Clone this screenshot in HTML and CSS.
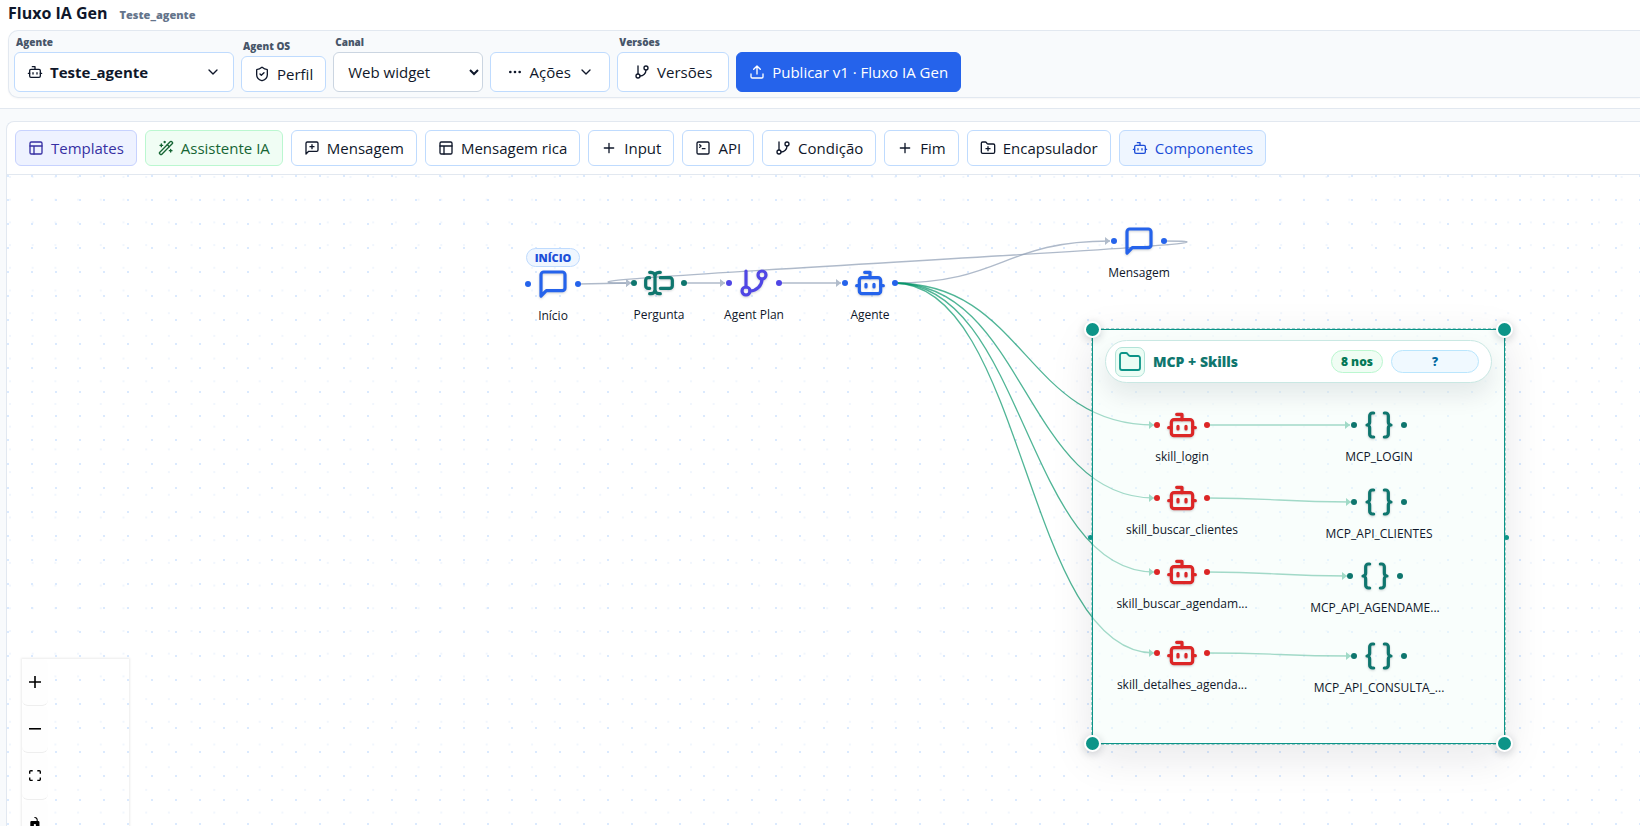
FILE: index.html
```
<!DOCTYPE html>
<html lang="pt-BR">
<head>
    <meta charset="UTF-8">
    <meta name="viewport" content="width=device-width, initial-scale=1.0">
    <title>Fluxo IA Gen</title>
    <link rel="stylesheet" href="styles.css">
</head>
<body>
    <!-- Icon sprite -->
    <svg class="sprite" aria-hidden="true">
        <symbol id="i-bot" viewBox="0 0 24 24"><path d="M12 8V4H8"/><rect width="16" height="12" x="4" y="8" rx="2"/><path d="M2 14h2M20 14h2M15 13v2M9 13v2"/></symbol>
        <symbol id="i-chevron" viewBox="0 0 24 24"><path d="m6 9 6 6 6-6"/></symbol>
        <symbol id="i-shield" viewBox="0 0 24 24"><path d="M20 13c0 5-3.5 7.5-7.66 8.95a1 1 0 0 1-.67-.01C7.5 20.5 4 18 4 13V6a1 1 0 0 1 1-1c2 0 4.5-1.2 6.24-2.72a1.17 1.17 0 0 1 1.52 0C14.51 3.81 17 5 19 5a1 1 0 0 1 1 1z"/><path d="m9 12 2 2 4-4"/></symbol>
        <symbol id="i-dots" viewBox="0 0 24 24"><circle cx="12" cy="12" r="1"/><circle cx="19" cy="12" r="1"/><circle cx="5" cy="12" r="1"/></symbol>
        <symbol id="i-branch" viewBox="0 0 24 24"><path d="M6 3v12"/><circle cx="18" cy="6" r="3"/><circle cx="6" cy="18" r="3"/><path d="M18 9a9 9 0 0 1-9 9"/></symbol>
        <symbol id="i-upload" viewBox="0 0 24 24"><path d="M12 3v12M17 8l-5-5-5 5M21 15v4a2 2 0 0 1-2 2H5a2 2 0 0 1-2-2v-4"/></symbol>
        <symbol id="i-layout" viewBox="0 0 24 24"><rect width="18" height="18" x="3" y="3" rx="2"/><path d="M3 9h18M9 21V9"/></symbol>
        <symbol id="i-wand" viewBox="0 0 24 24"><path d="m21.64 3.64-1.28-1.28a1.21 1.21 0 0 0-1.72 0L2.36 18.64a1.21 1.21 0 0 0 0 1.72l1.28 1.28a1.2 1.2 0 0 0 1.72 0L21.64 5.36a1.2 1.2 0 0 0 0-1.72"/><path d="m14 7 3 3M5 6v4M19 14v4M10 2v2M7 8H3M21 16h-4M11 3H9"/></symbol>
        <symbol id="i-message" viewBox="0 0 24 24"><path d="M21 15a2 2 0 0 1-2 2H7l-4 4V5a2 2 0 0 1 2-2h14a2 2 0 0 1 2 2z"/></symbol>
        <symbol id="i-message-plus" viewBox="0 0 24 24"><path d="M21 15a2 2 0 0 1-2 2H7l-4 4V5a2 2 0 0 1 2-2h14a2 2 0 0 1 2 2z"/><path d="M12 7v6M9 10h6"/></symbol>
        <symbol id="i-plus" viewBox="0 0 24 24"><path d="M5 12h14M12 5v14"/></symbol>
        <symbol id="i-terminal" viewBox="0 0 24 24"><path d="m7 11 2-2-2-2M11 13h4"/><rect width="18" height="18" x="3" y="3" rx="2"/></symbol>
        <symbol id="i-folder" viewBox="0 0 24 24"><path d="M20 20a2 2 0 0 0 2-2V8a2 2 0 0 0-2-2h-7.9a2 2 0 0 1-1.69-.9L9.6 3.9A2 2 0 0 0 7.93 3H4a2 2 0 0 0-2 2v13a2 2 0 0 0 2 2Z"/></symbol>
        <symbol id="i-folder-plus" viewBox="0 0 24 24"><path d="M20 20a2 2 0 0 0 2-2V8a2 2 0 0 0-2-2h-7.9a2 2 0 0 1-1.69-.9L9.6 3.9A2 2 0 0 0 7.93 3H4a2 2 0 0 0-2 2v13a2 2 0 0 0 2 2Z"/><path d="M12 10v6M9 13h6"/></symbol>
        <symbol id="i-input" viewBox="0 0 24 24"><path d="M5 4h1a3 3 0 0 1 3 3 3 3 0 0 1 3-3h1M13 20h-1a3 3 0 0 1-3-3 3 3 0 0 1-3 3H5M5 16H4a2 2 0 0 1-2-2v-4a2 2 0 0 1 2-2h1M13 8h7a2 2 0 0 1 2 2v4a2 2 0 0 1-2 2h-7M9 7v10"/></symbol>
        <symbol id="i-braces" viewBox="0 0 24 24"><path d="M8 3H7a2 2 0 0 0-2 2v5a2 2 0 0 1-2 2 2 2 0 0 1 2 2v5c0 1.1.9 2 2 2h1M16 21h1a2 2 0 0 0 2-2v-5c0-1.1.9-2 2-2a2 2 0 0 1-2-2V5a2 2 0 0 0-2-2h-1"/></symbol>
    </svg>

    <header class="header">
        <div class="title-row">
            <h1 class="title">Fluxo IA Gen</h1>
            <span class="subtitle">Teste_agente</span>
        </div>
        <div class="command-bar">
            <div class="field">
                <label class="field-label" for="agent">Agente</label>
                <button class="btn btn-agent" id="agent" type="button">
                    <svg class="icon"><use href="#i-bot"/></svg>
                    <span class="agent-name">Teste_agente</span>
                    <svg class="icon"><use href="#i-chevron"/></svg>
                </button>
            </div>
            <div class="field">
                <label class="field-label" for="profile">Agent OS</label>
                <button class="btn btn-short" id="profile" type="button"><svg class="icon"><use href="#i-shield"/></svg>Perfil</button>
            </div>
            <div class="field">
                <label class="field-label" for="channel">Canal</label>
                <select class="select" id="channel">
                    <option>Web widget</option>
                </select>
            </div>
            <button class="btn btn-actions" type="button"><svg class="icon"><use href="#i-dots"/></svg>Ações<svg class="icon"><use href="#i-chevron"/></svg></button>
            <div class="field">
                <label class="field-label" for="versions">Versões</label>
                <button class="btn btn-versions" id="versions" type="button"><svg class="icon"><use href="#i-branch"/></svg>Versões</button>
            </div>
            <button class="btn btn-primary" type="button"><svg class="icon"><use href="#i-upload"/></svg>Publicar v1 · Fluxo IA Gen</button>
        </div>
    </header>

    <main class="workspace">
        <section class="panel">
            <div class="toolbar">
                <button class="btn btn-short btn-indigo" type="button"><svg class="icon"><use href="#i-layout"/></svg>Templates</button>
                <button class="btn btn-short btn-green" type="button"><svg class="icon"><use href="#i-wand"/></svg>Assistente IA</button>
                <button class="btn btn-short" type="button"><svg class="icon"><use href="#i-message-plus"/></svg>Mensagem</button>
                <button class="btn btn-short" type="button"><svg class="icon"><use href="#i-layout"/></svg>Mensagem rica</button>
                <button class="btn btn-short" type="button"><svg class="icon"><use href="#i-plus"/></svg>Input</button>
                <button class="btn btn-short" type="button"><svg class="icon"><use href="#i-terminal"/></svg>API</button>
                <button class="btn btn-short" type="button"><svg class="icon"><use href="#i-branch"/></svg>Condição</button>
                <button class="btn btn-short" type="button"><svg class="icon"><use href="#i-plus"/></svg>Fim</button>
                <button class="btn btn-short" type="button"><svg class="icon"><use href="#i-folder-plus"/></svg>Encapsulador</button>
                <button class="btn btn-short btn-blue" type="button"><svg class="icon"><use href="#i-bot"/></svg>Componentes</button>
            </div>

            <div class="canvas">
                <svg class="edges" aria-hidden="true">
                    <defs>
                        <pattern id="grid" width="24" height="24" patternUnits="userSpaceOnUse"><rect class="grid-dot" width="2" height="2"/></pattern>
                        <pattern id="grid-faint" x="2" y="1" width="22.7" height="22.7" patternUnits="userSpaceOnUse"><circle class="grid-dot-faint" cx="1" cy="1" r="1"/></pattern>
                        <marker id="arrow" markerUnits="userSpaceOnUse" markerWidth="6" markerHeight="8" refX="5" refY="4" orient="auto"><path class="arrow" d="M0 0L5 4L0 8z"/></marker>
                        <marker id="arrow-green" markerUnits="userSpaceOnUse" markerWidth="6" markerHeight="8" refX="5" refY="4" orient="auto"><path class="arrow-green" d="M0 0L5 4L0 8z"/></marker>
                    </defs>
                    <rect width="100%" height="100%" fill="url(#grid-faint)"/>
                    <rect width="100%" height="100%" fill="url(#grid)"/>
                    <g class="edge">
                        <path marker-end="url(#arrow)" d="M571 109C597 109 597 108 624 108"/>
                        <path marker-end="url(#arrow)" d="M677 108H718"/>
                        <path marker-end="url(#arrow)" d="M771 108H834"/>
                        <path marker-end="url(#arrow)" d="M887 108C996 108 996 66 1103 66"/>
                        <path marker-end="url(#arrow)" d="M1157 66C1331 66 450 108 624 108"/>
                    </g>
                    <g class="edge edge-green">
                        <path marker-end="url(#arrow-green)" d="M887 108C1018 108 1018 250 1147 250"/>
                        <path marker-end="url(#arrow-green)" d="M887 108C1018 108 1018 323 1147 323"/>
                        <path marker-end="url(#arrow-green)" d="M887 108C1018 108 1018 397 1147 397"/>
                        <path marker-end="url(#arrow-green)" d="M887 108C1018 108 1018 478 1147 478"/>
                        <path marker-end="url(#arrow-green)" d="M1200 250H1343"/>
                        <path marker-end="url(#arrow-green)" d="M1200 323C1272 323 1272 327 1344 327"/>
                        <path marker-end="url(#arrow-green)" d="M1200 397C1270 397 1270 401 1340 401"/>
                        <path marker-end="url(#arrow-green)" d="M1200 478C1272 478 1272 481 1344 481"/>
                    </g>
                </svg>

                <div class="group">
                    <div class="group-header">
                        <span class="group-icon"><svg class="icon"><use href="#i-folder"/></svg></span>
                        <strong class="group-title">MCP + Skills</strong>
                        <span class="chip chip-count">8 nos</span>
                        <button class="chip chip-help" type="button">?</button>
                    </div>
                    <span class="resize top-left"></span>
                    <span class="resize top-right"></span>
                    <span class="resize bottom-left"></span>
                    <span class="resize bottom-right"></span>
                    <span class="port port-left"></span>
                    <span class="port port-right"></span>
                </div>

                <span class="start-badge">INÍCIO</span>
                <div class="node node-blue start">
                    <div class="node-row"><svg class="icon"><use href="#i-message"/></svg></div>
                    <span class="node-label">Início</span>
                </div>
                <div class="node node-teal question">
                    <div class="node-row"><svg class="icon"><use href="#i-input"/></svg></div>
                    <span class="node-label">Pergunta</span>
                </div>
                <div class="node node-indigo plan">
                    <div class="node-row"><svg class="icon"><use href="#i-branch"/></svg></div>
                    <span class="node-label">Agent Plan</span>
                </div>
                <div class="node node-blue agent">
                    <div class="node-row"><svg class="icon"><use href="#i-bot"/></svg></div>
                    <span class="node-label">Agente</span>
                </div>
                <div class="node node-blue message">
                    <div class="node-row"><svg class="icon"><use href="#i-message"/></svg></div>
                    <span class="node-label">Mensagem</span>
                </div>

                <div class="node node-red skill-login">
                    <div class="node-row"><svg class="icon"><use href="#i-bot"/></svg></div>
                    <span class="node-label">skill_login</span>
                </div>
                <div class="node node-red skill-clients">
                    <div class="node-row"><svg class="icon"><use href="#i-bot"/></svg></div>
                    <span class="node-label">skill_buscar_clientes</span>
                </div>
                <div class="node node-red skill-search">
                    <div class="node-row"><svg class="icon"><use href="#i-bot"/></svg></div>
                    <span class="node-label">skill_buscar_agendam...</span>
                </div>
                <div class="node node-red skill-details">
                    <div class="node-row"><svg class="icon"><use href="#i-bot"/></svg></div>
                    <span class="node-label">skill_detalhes_agenda...</span>
                </div>

                <div class="node node-teal mcp-login">
                    <div class="node-row"><svg class="icon"><use href="#i-braces"/></svg></div>
                    <span class="node-label">MCP_LOGIN</span>
                </div>
                <div class="node node-teal mcp-clients">
                    <div class="node-row"><svg class="icon"><use href="#i-braces"/></svg></div>
                    <span class="node-label">MCP_API_CLIENTES</span>
                </div>
                <div class="node node-teal mcp-search">
                    <div class="node-row"><svg class="icon"><use href="#i-braces"/></svg></div>
                    <span class="node-label">MCP_API_AGENDAME...</span>
                </div>
                <div class="node node-teal mcp-details">
                    <div class="node-row"><svg class="icon"><use href="#i-braces"/></svg></div>
                    <span class="node-label">MCP_API_CONSULTA_...</span>
                </div>

                <div class="controls">
                    <button class="control" type="button" aria-label="Aumentar zoom"><svg viewBox="0 0 32 32"><path d="M32 18.133H18.133V32h-4.266V18.133H0v-4.266h13.867V0h4.266v13.867H32z"/></svg></button>
                    <button class="control" type="button" aria-label="Diminuir zoom"><svg viewBox="0 0 32 5"><path d="M0 0h32v4.2H0z"/></svg></button>
                    <button class="control" type="button" aria-label="Ajustar à tela"><svg viewBox="0 0 32 30"><path d="M3.692 4.63c0-.53.4-.938.939-.938h5.215V0H4.708C2.13 0 0 2.054 0 4.63v5.216h3.692V4.631zM27.354 0h-5.2v3.692h5.17c.53 0 .984.4.984.939v5.215H32V4.631A4.624 4.624 0 0027.354 0zm.954 24.83c0 .532-.4.94-.939.94h-5.215v3.768h5.215c2.577 0 4.631-2.13 4.631-4.707v-5.139h-3.692v5.139zm-23.677.94c-.531 0-.939-.4-.939-.94v-5.138H0v5.139c0 2.577 2.13 4.707 4.708 4.707h5.138V25.77H4.631z"/></svg></button>
                    <button class="control" type="button" aria-label="Bloquear edição"><svg viewBox="0 0 25 32"><path d="M21.333 10.667H19.81V7.619C19.81 3.429 16.38 0 12.19 0c-4.114 1.828-1.37 2.133.305 2.438 1.676.305 4.42 2.59 4.42 5.181v3.048H3.047A3.056 3.056 0 000 13.714v15.238A3.056 3.056 0 003.048 32h18.285a3.056 3.056 0 003.048-3.048V13.714a3.056 3.056 0 00-3.048-3.047zM12.19 24.533a3.056 3.056 0 01-3.047-3.047 3.056 3.056 0 013.047-3.048 3.056 3.056 0 013.048 3.048 3.056 3.056 0 01-3.048 3.047z"/></svg></button>
                </div>
            </div>
        </section>
    </main>
</body>
</html>
```
FILE: styles.css
```
:root {
    --text: #0f172a;
    --muted: #64748b;
    --line: #e2e8f0;
    --btn-line: #bfdbfe;
    --surface: #f8fafc;
    --blue: #2563eb;
    --indigo: #4f46e5;
    --teal: #0f766e;
    --teal-line: #0d9488;
    --red: #dc2626;
}

* {
    box-sizing: border-box;
}

body {
    margin: 0;
    height: 100vh;
    display: flex;
    flex-direction: column;
    overflow: hidden;
    background: var(--surface);
    color: var(--text);
    font-family: "Open Sans", "Noto Sans", sans-serif;
    font-size: 15px;
}

button, select {
    font: inherit;
    color: inherit;
}

.sprite {
    display: none;
}

.icon {
    width: 16px;
    height: 16px;
    flex: none;
    fill: none;
    stroke: currentColor;
    stroke-width: 2;
    stroke-linecap: round;
    stroke-linejoin: round;
}

/* Header */
.header {
    padding: 2px 0 10px 8px;
    background: #fff;
    border-bottom: 1px solid var(--line);
}

.title-row {
    display: flex;
    align-items: center;
    gap: 12px;
    height: 22px;
    margin-bottom: 6px;
}

.title {
    margin: 0;
    font-size: 16px;
    font-weight: 700;
}

.subtitle {
    padding-top: 2px;
    font-size: 11px;
    font-weight: 800;
    color: var(--muted);
}

.command-bar {
    display: flex;
    align-items: flex-end;
    gap: 7px;
    padding: 5px;
    background: var(--surface);
    border: 1px solid var(--line);
    border-right: 0;
    border-radius: 10px 0 0 10px;
    box-shadow: 0 1px 2px rgba(15, 23, 42, 0.04);
}

.field {
    display: flex;
    flex-direction: column;
    gap: 3px;
}

.field-label {
    padding-left: 2px;
    font-size: 10px;
    font-weight: 800;
    line-height: 13px;
    color: #475569;
}

.btn {
    display: flex;
    align-items: center;
    justify-content: center;
    gap: 7px;
    height: 40px;
    padding: 0 12px;
    background: #fff;
    border: 1px solid var(--btn-line);
    border-radius: 6px;
    white-space: nowrap;
}

.btn-short {
    height: 36px;
}

.btn-agent {
    width: 220px;
    font-weight: 700;
}

.agent-name {
    flex: 1;
    text-align: left;
}

.select {
    width: 150px;
    height: 40px;
    padding: 0 0 0 10px;
    background: #fff;
    border: 1px solid #cbd5e1;
    border-radius: 6px;
}

.btn-actions {
    width: 120px;
}

.btn-versions {
    width: 112px;
}

.btn-primary {
    background: var(--blue);
    border-color: var(--blue);
    color: #fff;
}

.btn-indigo {
    background: #eef2ff;
    border-color: #c7d2fe;
    color: #3730a3;
}

.btn-green {
    background: #f0fdf4;
    border-color: #bbf7d0;
    color: #166534;
}

.btn-blue {
    background: #eff6ff;
    color: #1d4ed8;
}

/* Workspace */
.workspace {
    flex: 1;
    display: flex;
    min-height: 0;
    padding: 12px 0 0 6px;
}

.panel {
    flex: 1;
    display: flex;
    flex-direction: column;
    min-width: 0;
    background: #fff;
    border: 1px solid var(--line);
    border-width: 1px 0 0 1px;
    border-radius: 8px 0 0 0;
    overflow: hidden;
}

.toolbar {
    display: flex;
    gap: 8px;
    padding: 8px;
    border-bottom: 1px solid var(--line);
}

.canvas {
    position: relative;
    flex: 1;
    overflow: hidden;
    background: #fff;
}

.edges {
    position: absolute;
    inset: 0;
    width: 100%;
    height: 100%;
}

.grid-dot {
    fill: #dbeafe;
}

.grid-dot-faint {
    fill: #edf3fd;
}

.edge {
    fill: none;
    stroke: #94a3b8;
    stroke-opacity: 0.75;
    stroke-width: 1.3;
}

.edge-green {
    stroke: #059669;
    stroke-opacity: 0.7;
}

.arrow {
    fill: #b1bccb;
    stroke: none;
}

.arrow-green {
    fill: #4db794;
    stroke: none;
}

/* Group */
.group {
    position: absolute;
    left: 1085px;
    top: 154px;
    width: 413px;
    height: 415px;
    padding: 10px 12px;
    background: rgba(243, 253, 250, 0.5);
    border: 1px solid var(--teal-line);
    outline: 1px dashed rgba(13, 148, 136, 0.4);
    box-shadow: 0 12px 40px rgba(15, 23, 42, 0.1);
}

.group-header {
    display: flex;
    align-items: center;
    gap: 8px;
    height: 43px;
    padding: 0 12px 0 9px;
    background: #fff;
    border: 1px solid #c9e8e3;
    border-radius: 22px;
    box-shadow: 0 12px 24px rgba(15, 23, 42, 0.09);
}

.group-icon {
    display: grid;
    place-items: center;
    width: 30px;
    height: 30px;
    background: #ecfdf5;
    border: 1px solid #b2e3d8;
    border-radius: 7px;
    color: var(--teal-line);
}

.group-icon .icon {
    width: 24px;
    height: 24px;
    stroke-width: 1.8;
}

.group-title {
    flex: 1;
    font-size: 14px;
    font-weight: 800;
    color: var(--teal);
}

.chip {
    height: 23px;
    padding: 0 9px;
    border: 1px solid;
    border-radius: 12px;
    font-size: 12px;
    font-weight: 800;
    line-height: 21px;
    text-align: center;
}

.chip-count {
    background: #f0fdf4;
    border-color: #bbf7d0;
    color: #047857;
}

.chip-help {
    width: 88px;
    background: #f0f9ff;
    border-color: #bae6fd;
    color: #0369a1;
}

.resize {
    position: absolute;
    width: 17px;
    height: 17px;
    background: var(--teal-line);
    border: 2px solid #fff;
    border-radius: 50%;
    box-shadow: 0 2px 8px rgba(15, 23, 42, 0.2);
}

.top-left { left: -9px; top: -9px; }
.top-right { right: -9px; top: -9px; }
.bottom-left { left: -9px; bottom: -9px; }
.bottom-right { right: -9px; bottom: -9px; }

.port {
    position: absolute;
    top: 205px;
    width: 5px;
    height: 5px;
    background: var(--teal-line);
    border-radius: 50%;
}

.port-left { left: -5px; }
.port-right { right: -5px; }

/* Nodes */
.node {
    position: absolute;
    display: flex;
    flex-direction: column;
    align-items: center;
    gap: 8px;
    width: 150px;
}

.node-row {
    display: flex;
    align-items: center;
    gap: 6px;
}

.node-row::before,
.node-row::after {
    content: "";
    width: 6px;
    height: 6px;
    background: currentColor;
    border-radius: 50%;
}

.node .icon {
    width: 32px;
    height: 32px;
    stroke-width: 2.4;
    filter: drop-shadow(0 1px 1px rgba(15, 23, 42, 0.2));
}

.node-label {
    font-size: 12px;
    font-weight: 500;
    line-height: 16px;
    color: var(--text);
    white-space: nowrap;
}

.node-blue { color: var(--blue); }
.node-teal { color: var(--teal); }
.node-indigo { color: var(--indigo); }
.node-red { color: var(--red); }

.start { left: 471px; top: 93px; }
.question { left: 577px; top: 92px; }
.plan { left: 672px; top: 92px; }
.agent { left: 788px; top: 92px; }
.message { left: 1057px; top: 50px; }

.skill-login { left: 1100px; top: 234px; }
.skill-clients { left: 1100px; top: 307px; }
.skill-search { left: 1100px; top: 381px; }
.skill-details { left: 1100px; top: 462px; }

.mcp-login { left: 1297px; top: 234px; }
.mcp-clients { left: 1297px; top: 311px; }
.mcp-search { left: 1293px; top: 385px; }
.mcp-details { left: 1297px; top: 465px; }

.start-badge {
    position: absolute;
    left: 519px;
    top: 73px;
    width: 54px;
    height: 19px;
    background: #eff6ff;
    border: 1px solid var(--btn-line);
    border-radius: 10px;
    font-size: 11px;
    font-weight: 800;
    line-height: 17px;
    text-align: center;
    color: #1d4ed8;
}

/* Zoom controls */
.controls {
    position: absolute;
    left: 15px;
    top: 484px;
    width: 107px;
    box-shadow: 0 0 2px 1px rgba(0, 0, 0, 0.08);
}

.control {
    display: flex;
    align-items: center;
    justify-content: center;
    width: 26px;
    height: 47px;
    padding: 0;
    background: #fefefe;
    border: 0;
    border-bottom: 1px solid #eee;
    border-radius: 6px;
}

.control svg {
    width: 12px;
    max-height: 12px;
}
```
